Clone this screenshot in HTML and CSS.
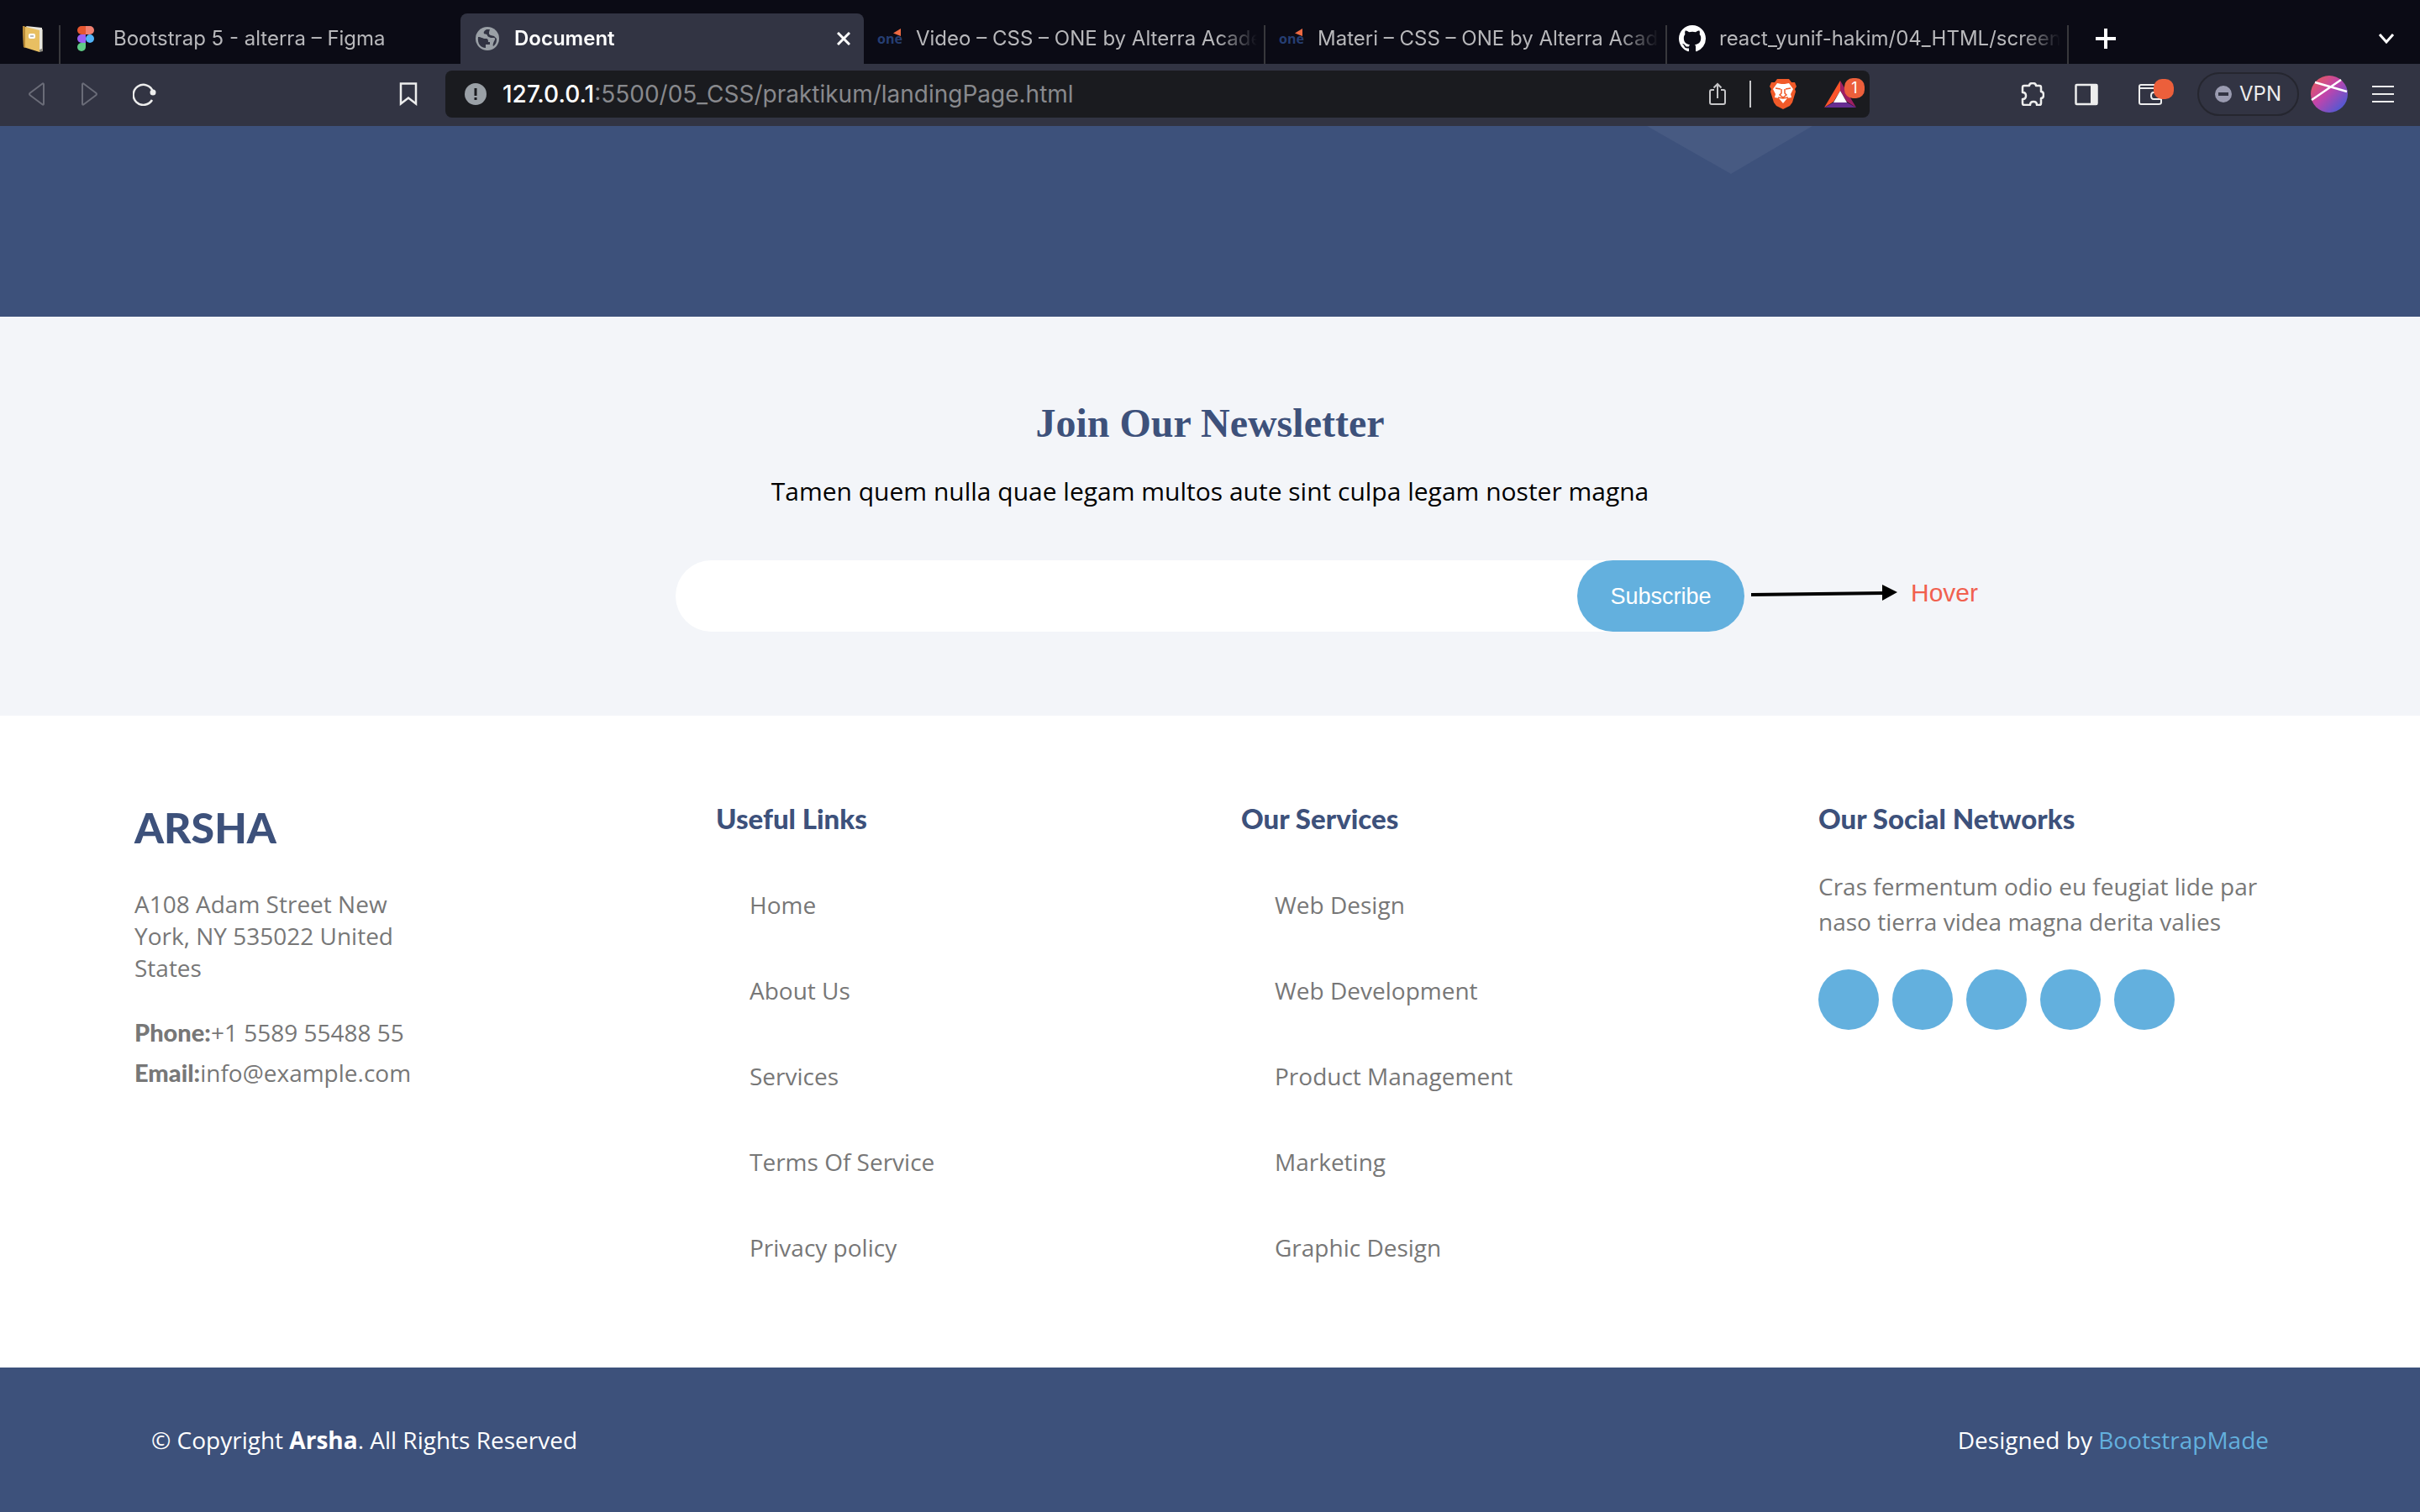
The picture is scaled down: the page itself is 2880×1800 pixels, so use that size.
FILE: index.html
```html
<!DOCTYPE html>
<html lang="en">
<head>
<meta charset="utf-8">
<title>Document</title>
<link rel="stylesheet" href="styles.css">
</head>
<body>
<div class="browser">
  <nav class="tabs" aria-label="Tabs">
    <a class="tab tab-pinned" href="#" aria-label="Notes">
      <svg class="icon" viewBox="0 0 28 32"><path d="M5 2l20 3v26l-4 1z" fill="#8d8a80"/><path d="M5 1l19 2v25l-3 1z" fill="#e9e7df"/><path d="M1 1l20 5v26L2 26z" fill="#e8bf62"/><path d="M1 1l3 1v25l-2-1z" fill="#b98a36"/><rect x="8" y="10" width="8" height="6" rx="2" fill="#fff"/><path d="M10 13h4" stroke="#777" /></svg>
    </a>
    <a class="tab tab-figma" href="#">
      <svg class="icon icon-figma" viewBox="0 0 20 30"><path d="M5 0h5v10H5A5 5 0 0 1 5 0z" fill="#e5562f"/><path d="M10 0h5a5 5 0 0 1 0 10h-5z" fill="#f08070"/><path d="M5 10h5v10H5a5 5 0 0 1 0-10z" fill="#9b60f5"/><circle cx="15" cy="15" r="5" fill="#52b4f8"/><path d="M5 20h5v5a5 5 0 1 1-5-5z" fill="#5fcb85"/></svg>
      <span class="tab-title">Bootstrap 5 - alterra – Figma</span>
    </a>
    <a class="tab tab-active" href="#">
      <svg class="icon icon-globe" viewBox="0 0 28 28"><circle cx="14" cy="14" r="14" fill="#9aa0a6"/><path d="M3 12c4 0 5 2 9 2 3 0 3 2 3 4h2v3h-5v4c-6 0-10-5-9-13zM13 3c-2 1-4 3-3 5 1 1 3 0 4 2 0 2 3 2 4 3h4c2 0 1 3 0 4-1 2-2 5-1 6 4-3 4-6 4-9l-3-3-4-1c-3-1-2-4-1-7z" fill="#323443"/></svg>
      <span class="tab-title">Document</span>
      <button class="plain" type="button" aria-label="Close tab"><svg class="icon-close" viewBox="0 0 16 16"><path d="M1 1l14 14M15 1L1 15" stroke="#fff" stroke-width="3"/></svg></button>
    </a>
    <a class="tab" href="#">
      <span class="one" aria-hidden="true">one<svg class="one-flag" viewBox="0 0 10 10"><path d="M10 0v10L0 6z" fill="#ee6a42"/></svg></span>
      <span class="tab-title">Video – CSS – ONE by Alterra Academy</span>
    </a>
    <a class="tab" href="#">
      <span class="one" aria-hidden="true">one<svg class="one-flag" viewBox="0 0 10 10"><path d="M10 0v10L0 6z" fill="#ee6a42"/></svg></span>
      <span class="tab-title">Materi – CSS – ONE by Alterra Academy</span>
    </a>
    <a class="tab" href="#">
      <svg class="icon icon-github" viewBox="0 0 16 16"><path fill="#fff" d="M8 0C3.58 0 0 3.58 0 8c0 3.54 2.29 6.53 5.47 7.59.4.07.55-.17.55-.38 0-.19-.01-.82-.01-1.49-2.01.37-2.53-.49-2.69-.94-.09-.23-.48-.94-.82-1.13-.28-.15-.68-.52-.01-.53.63-.01 1.08.58 1.23.82.72 1.21 1.87.87 2.33.66.07-.52.28-.87.51-1.07-1.78-.2-3.64-.89-3.64-3.95 0-.87.31-1.59.82-2.15-.08-.2-.36-1.02.08-2.12 0 0 .67-.21 2.2.82.64-.18 1.32-.27 2-.27s1.36.09 2 .27c1.53-1.04 2.2-.82 2.2-.82.44 1.1.16 1.92.08 2.12.51.56.82 1.27.82 2.15 0 3.07-1.87 3.75-3.65 3.95.29.25.54.73.54 1.48 0 1.07-.01 1.93-.01 2.2 0 .21.15.46.55.38A8.01 8.01 0 0 0 16 8c0-4.42-3.58-8-8-8z"/></svg>
      <span class="tab-title">react_yunif-hakim/04_HTML/screenshots</span>
    </a>
    <button class="plain new-tab" type="button" aria-label="New tab"><svg viewBox="0 0 24 24"><path d="M12 0v24M0 12h24" stroke="#fff" stroke-width="4"/></svg></button>
    <button class="plain tab-search" type="button" aria-label="Search tabs"><svg viewBox="0 0 20 12"><path d="M2 1l8 9 8-9" fill="none" stroke="#fff" stroke-width="3"/></svg></button>
  </nav>

  <div class="toolbar">
    <div class="nav-buttons">
      <button class="plain" type="button" aria-label="Back"><svg class="tool" viewBox="0 0 28 28"><path d="M22 2.500v23q0 2-2 .5L6 15.500q-2-1.500 0-3L20 2q2-1.500 2 .5z" fill="none" stroke="#6a6c78" stroke-width="2"/></svg></button>
      <button class="plain" type="button" aria-label="Forward"><svg class="tool" viewBox="0 0 28 28"><path d="M4 2.500v23q0 2 2 .5l14-10.500q2-1.500 0-3L6 2q-2-1.500-2 .5z" fill="none" stroke="#6a6c78" stroke-width="2"/></svg></button>
      <button class="plain" type="button" aria-label="Reload"><svg class="tool" viewBox="0 0 28 28"><path d="M24 11A12 12 0 1 0 23 21" fill="none" stroke="#ededed" stroke-width="2.500"/><circle cx="24" cy="12" r="3.500" fill="#ededed"/></svg></button>
    </div>
    <button class="plain bookmark" type="button" aria-label="Bookmark"><svg class="tool" viewBox="0 0 28 28"><path d="M5 1.500h18v24l-9-7-9 7z" fill="none" stroke="#ededed" stroke-width="2.500"/></svg></button>
    <div class="address">
      <svg class="tool" viewBox="0 0 28 28"><circle cx="14" cy="14" r="13" fill="#9aa0a6"/><path d="M14 7v9M14 18v3" stroke="#1a1b1f" stroke-width="3"/></svg>
      <span class="url"><b>127.0.0.1</b>:5500/05_CSS/praktikum/landingPage.html</span>
      <button class="plain" type="button" aria-label="Share"><svg class="tool" viewBox="0 0 28 28"><path d="M10 9H7q-2 0-2 2v13q0 2 2 2h14q2 0 2-2V11q0-2-2-2h-3M14 19V2M9.500 6.500L14 2l4.500 4.500" fill="none" stroke="#c6c6c8" stroke-width="2"/></svg></button>
      <span class="rule"></span>
      <button class="plain" type="button" aria-label="Shields"><svg class="icon-lion" viewBox="0 0 32 36"><path d="M9 0h14l3 4 4 0 2 5-2 3 1 3-4 13-3 4-8 4-8-4-3-4L1 15l1-3-2-3 2-5h4z" fill="#f15a29"/><path d="M9 5l5 1h4l5-1 5 7-3 6 1 4-6 1-2 1-2-2-2 2-2-1-6-1 1-4-3-6z" fill="#fff"/><path d="M11 23l5-2 5 2-5 6z" fill="#fff"/><path d="M7 11l6 1M25 11l-6 1M14 12v5l-2 2 4 3 4-3-2-2v-5M10 22l6 1 6-1" fill="none" stroke="#f15a29" stroke-width="1.500"/></svg></button>
      <button class="plain rewards" type="button" aria-label="Rewards"><svg class="icon-bat" viewBox="0 0 38 32"><path d="M19 0L0 32l11-7 8-13z" fill="#fb542b"/><path d="M19 0l19 32-11-7-8-13z" fill="#9e1f63"/><path d="M0 32h38l-11-6H11z" fill="#662d91"/><path d="M19 12l8 14H11z" fill="#fff"/></svg><span class="badge">1</span></button>
    </div>
    <div class="extensions">
      <button class="plain" type="button" aria-label="Extensions"><svg class="tool" viewBox="0 0 28 28"><path d="M2 6q0-2 2-2h6q0-3 4-3t4 3h4q2 0 2 2v5q3 0 3 4t-3 4v6q0 2-2 2h-3q0-4-4-4t-4 4H4q-2 0-2-2v-5q4 0 4-4t-4-4z" fill="none" stroke="#ededed" stroke-width="2.500" stroke-linejoin="round"/></svg></button>
      <button class="plain" type="button" aria-label="Sidebar"><svg class="tool" viewBox="0 0 28 28"><rect x="1.500" y="3" width="25" height="23" rx="1" fill="none" stroke="#ededed" stroke-width="2.500"/><path d="M19 2h8v25h-8z" fill="#ededed"/></svg></button>
      <button class="plain wallet" type="button" aria-label="Wallet"><svg class="tool" viewBox="0 0 28 28"><path d="M26 8V3H3q-2 0-2 2v19q0 2 2 2h21q3 0 3-2v-4M2 7h24v5M27 12h-9q-3 0-3 4t3 4h9z" fill="none" stroke="#ededed" stroke-width="2"/></svg><span class="badge"></span></button>
    </div>
    <button class="vpn" type="button"><svg viewBox="0 0 20 20"><circle cx="10" cy="10" r="10" fill="#9a9bb0"/><path d="M4 10h12" stroke="#323443" stroke-width="4"/></svg>VPN</button>
    <button class="plain avatar" type="button" aria-label="Profile"><svg viewBox="0 0 44 44"><defs><linearGradient id="sky" x1="0" y1="0" x2="1" y2="1"><stop offset="0" stop-color="#ee5f4a"/><stop offset=".45" stop-color="#c044ac"/><stop offset="1" stop-color="#2b60e0"/></linearGradient></defs><circle cx="22" cy="22" r="22" fill="url(#sky)"/><path d="M5 8l38 11M1 29L36 5" stroke="#fff" stroke-width="2.500"/></svg></button>
    <button class="plain menu" type="button" aria-label="Menu"><svg class="tool" viewBox="0 0 28 28"><path d="M1 5h26M1 14h26M1 23h26" stroke="#ededed" stroke-width="2"/></svg></button>
  </div>
</div>

<main>
  <section class="hero" aria-hidden="true">
    <svg class="hero-shape" viewBox="0 0 200 57"><path d="M2 0h197L102 57z" fill="#475a82"/></svg>
  </section>

  <section class="newsletter">
    <h2>Join Our Newsletter</h2>
    <p>Tamen quem nulla quae legam multos aute sint culpa legam noster magna</p>
    <div class="signup">
      <form class="subscribe">
        <input type="email" aria-label="Email address">
        <button type="button">Subscribe</button>
      </form>
      <div class="note">
        <svg class="arrow" viewBox="0 0 174 20"><path d="M0 12l160-2" stroke="#000" stroke-width="4"/><path d="M156 0l18 9-18 10z"/></svg>
        <span>Hover</span>
      </div>
    </div>
  </section>
</main>

<footer>
  <div class="columns">
    <section class="about">
      <h3 class="brand">ARSHA</h3>
      <address>A108 Adam Street New York, NY 535022 United States</address>
      <p class="contact"><strong>Phone:</strong>+1 5589 55488 55</p>
      <p class="contact"><strong>Email:</strong>info@example.com</p>
    </section>
    <section>
      <h4>Useful Links</h4>
      <ul>
        <li><a href="#">Home</a></li>
        <li><a href="#">About Us</a></li>
        <li><a href="#">Services</a></li>
        <li><a href="#">Terms Of Service</a></li>
        <li><a href="#">Privacy policy</a></li>
      </ul>
    </section>
    <section>
      <h4>Our Services</h4>
      <ul>
        <li><a href="#">Web Design</a></li>
        <li><a href="#">Web Development</a></li>
        <li><a href="#">Product Management</a></li>
        <li><a href="#">Marketing</a></li>
        <li><a href="#">Graphic Design</a></li>
      </ul>
    </section>
    <section>
      <h4>Our Social Networks</h4>
      <p class="social-text">Cras fermentum odio eu feugiat lide par naso tierra videa magna derita valies</p>
      <div class="social">
        <a href="#" aria-label="Twitter"></a>
        <a href="#" aria-label="Facebook"></a>
        <a href="#" aria-label="Instagram"></a>
        <a href="#" aria-label="Skype"></a>
        <a href="#" aria-label="LinkedIn"></a>
      </div>
    </section>
  </div>
  <div class="legal">
    <p>© Copyright <strong>Arsha</strong>. All Rights Reserved</p>
    <p>Designed by <a href="#">BootstrapMade</a></p>
  </div>
</footer>
</body>
</html>
```
FILE: styles.css
```css
:root {
  --navy: #3d517b;
  --sky: #63b0de;
  --grey: #777777;
  --bar: #323443;
}

* { box-sizing: border-box; }

body {
  margin: 0;
  min-height: 100vh;
  display: flex;
  flex-direction: column;
  font: 28px/38px "Open Sans", "Noto Sans", sans-serif;
  background: #fff;
}

h2, h3, h4, p, ul { margin: 0; padding: 0; }
ul { list-style: none; }
a { color: inherit; text-decoration: none; }
svg { display: block; flex: none; }

.plain {
  display: block;
  flex: none;
  padding: 0;
  border: 0;
  background: none;
}

/* Browser frame */
.browser { font-family: Inter, "Liberation Sans", sans-serif; }

.tabs {
  display: flex;
  align-items: flex-end;
  height: 76px;
  padding-top: 16px;
  background: #0b0b15;
}

.tab {
  display: flex;
  align-items: center;
  gap: 18px;
  width: 478px;
  height: 46px;
  padding: 0 8px 14px 16px;
  border-right: 2px solid #38383c;
  font-size: 24px;
  line-height: 32px;
  color: #b8b8bb;
}

.tab-pinned { width: 72px; padding-left: 26px; }
.tab-figma { width: 476px; padding-left: 20px; gap: 23px; border-right: 0; }

.tab-active {
  width: 480px;
  height: 60px;
  padding: 0 16px 0 18px;
  border: 0;
  border-radius: 8px 8px 0 0;
  background: var(--bar);
  color: #fff;
  font-weight: 600;
}

.tab-title {
  flex: 1;
  min-width: 0;
  overflow: hidden;
  white-space: nowrap;
  mask-image: linear-gradient(to left, transparent, #000 48px);
}

.icon { width: 28px; height: 32px; }
.icon-figma { width: 20px; height: 30px; }
.icon-globe { height: 28px; }
.icon-github { width: 32px; height: 32px; margin: 0 -2px; }
.icon-close { width: 16px; height: 16px; }

.one {
  position: relative;
  width: 28px;
  font: bold 16px/24px "Open Sans", sans-serif;
  color: #263e72;
}
.one-flag { position: absolute; right: 0; top: 0; width: 9px; height: 9px; }

.new-tab { width: 24px; margin: 0 0 18px 32px; }
.tab-search { width: 20px; margin: 0 30px 24px auto; }

.toolbar {
  display: flex;
  align-items: center;
  height: 74px;
  padding: 0 30px 2px;
  background: var(--bar);
}

.tool { width: 28px; height: 28px; }
.nav-buttons { display: flex; gap: 36px; }
.bookmark { margin: 0 30px 0 286px; }

.address {
  display: flex;
  align-items: center;
  flex: 1;
  height: 56px;
  padding: 0 16px 0 22px;
  border-radius: 8px;
  background: #1a1b1f;
}

.url {
  flex: 1;
  margin-left: 18px;
  font-size: 28px;
  color: #88898d;
}
.url b { font-weight: 500; color: #fff; }

.rule { width: 2px; height: 32px; margin: 0 22px 0 24px; background: #c6c6c8; }
.icon-lion { width: 32px; height: 36px; }
.icon-bat { width: 38px; height: 32px; }
.rewards, .wallet { position: relative; }
.rewards { margin-left: 33px; }

.badge {
  position: absolute;
  top: -3px;
  right: -10px;
  width: 24px;
  height: 24px;
  border-radius: 10px;
  background: #ec5f3b;
  color: #fff;
  font: 18px/24px Inter, sans-serif;
  text-align: center;
}
.wallet .badge { top: -4px; right: -14px; }

.extensions { display: flex; gap: 36px; margin: 0 42px 0 180px; }
.extensions .wallet { margin-left: 12px; }

.vpn {
  display: flex;
  align-items: center;
  gap: 9px;
  height: 52px;
  margin-right: 14px;
  padding: 0 19px;
  border: 2px solid #25262f;
  border-radius: 26px;
  background: none;
  color: #ededed;
  font: 24px/32px Inter, sans-serif;
}
.vpn svg { width: 20px; }
.avatar { width: 44px; margin-right: 28px; }

/* Landing page */
.hero { height: 227px; background: var(--navy); }
.hero-shape { width: 200px; margin-left: 68%; }

.newsletter {
  padding: 99px 0 100px;
  background: #f3f5f9;
  text-align: center;
}

.newsletter h2 {
  font: bold 48px/56px "Liberation Serif", serif;
  color: var(--navy);
}

.newsletter p {
  margin-top: 32px;
  font-size: 30px;
  line-height: 42px;
}

.signup {
  display: grid;
  grid-template-columns: 1fr minmax(0, 1272px) 1fr;
  align-items: center;
  margin-top: 61px;
}

.subscribe {
  grid-column: 2;
  display: flex;
  height: 85px;
  border-radius: 43px;
  background: #fff;
}

.subscribe input {
  flex: 1;
  min-width: 0;
  padding: 0 40px;
  border: 0;
  outline: 0;
  background: none;
  font: inherit;
}

.subscribe button {
  width: 199px;
  border: 0;
  border-radius: 43px;
  background: var(--sky);
  color: #fff;
  font: 27px/38px "Liberation Sans", sans-serif;
}

.note {
  display: flex;
  align-items: center;
  gap: 16px;
  padding: 0 0 8px 8px;
  color: #f1604f;
  font: 30px/38px "Liberation Sans", sans-serif;
}
.arrow { width: 174px; }

footer {
  flex: 1;
  display: flex;
  flex-direction: column;
  color: var(--grey);
}

.columns {
  flex: 1;
  display: grid;
  grid-template-columns: 692fr 625fr 687fr 556fr;
  padding: 99px 160px;
}

h4 {
  font: 900 33px/46px Lato, sans-serif;
  color: var(--navy);
}

.brand {
  margin-top: 4px;
  font: 900 50px/60px Lato, sans-serif;
  color: var(--navy);
}

address {
  width: 340px;
  margin: 42px 0 34px;
  font-style: normal;
}
.contact { line-height: 48px; }
.contact strong { font: 900 29px/48px Lato, sans-serif; }

.columns ul { padding: 61px 0 0 40px; }
.columns li + li { margin-top: 64px; }

.social-text { margin-top: 37px; line-height: 42px; }
.social { display: flex; gap: 16px; margin-top: 36px; }
.social a { width: 72px; height: 72px; border-radius: 50%; background: var(--sky); }

.legal {
  display: flex;
  justify-content: space-between;
  padding: 67px 180px;
  background: var(--navy);
  color: #fff;
}
.legal a { color: var(--sky); }
```
